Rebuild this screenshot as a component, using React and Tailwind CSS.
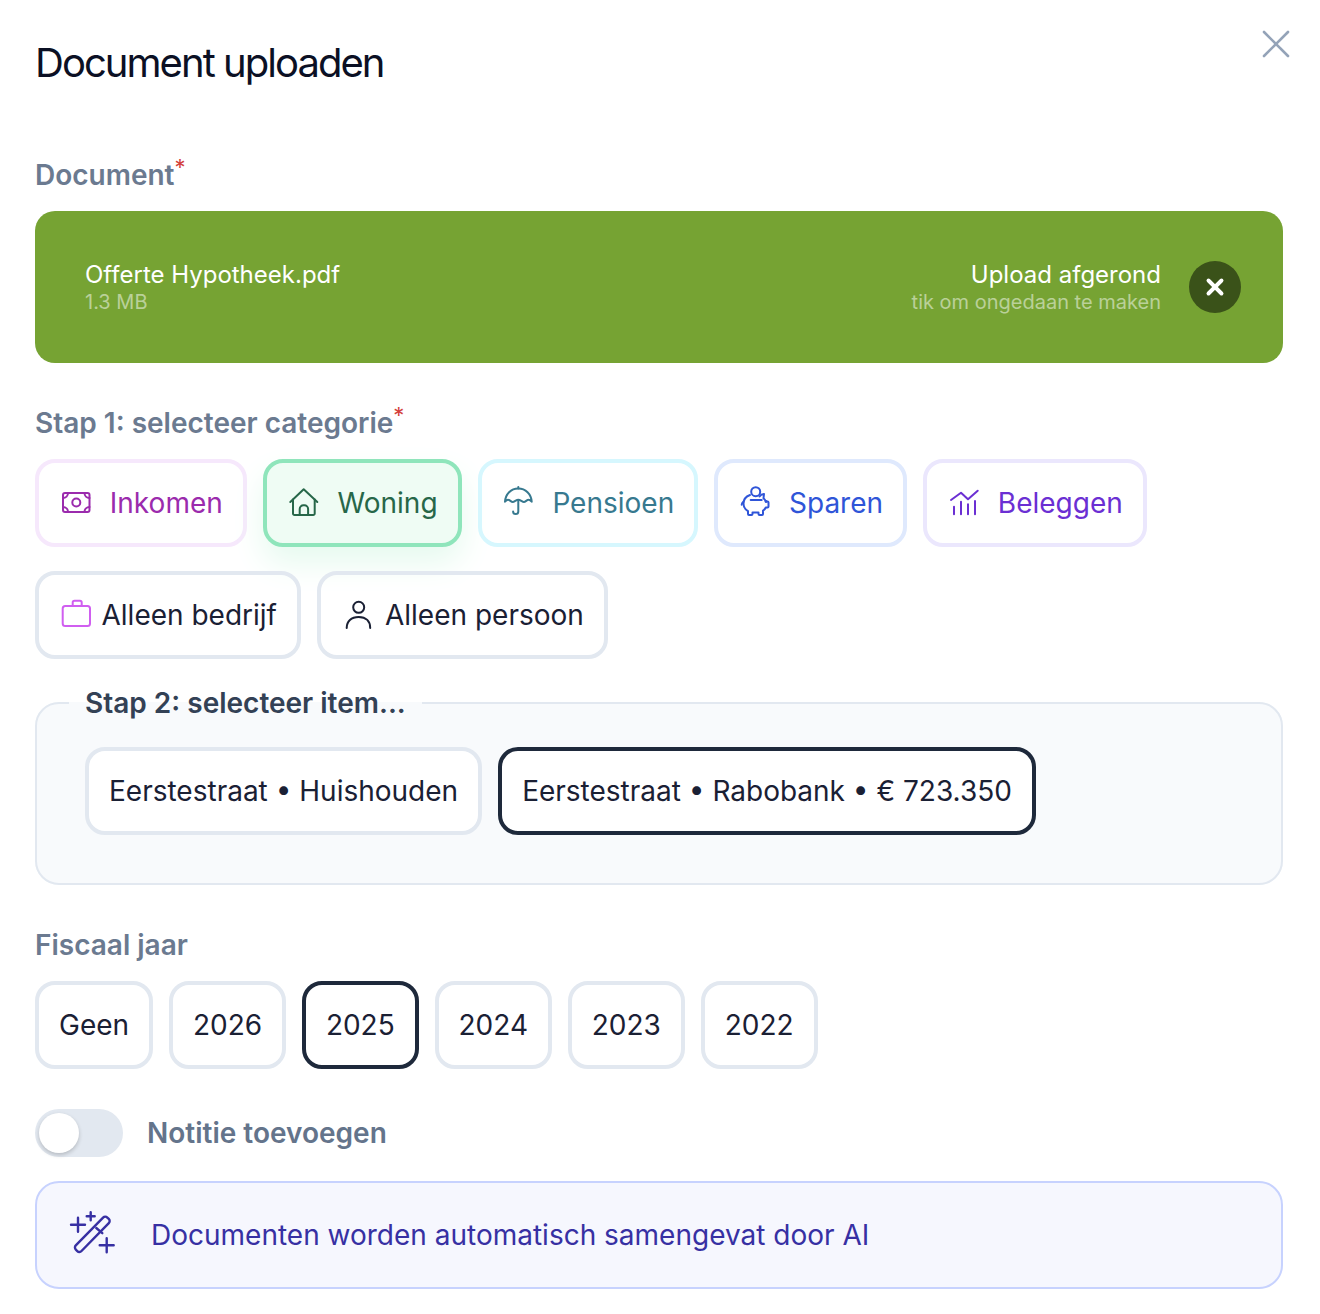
import React from 'react';
import { X } from 'lucide-react';

// Iconen getekend op een raster van 32px
const Icon = ({ children }) => (
    <svg viewBox="0 0 32 32" fill="none" stroke="currentColor" strokeWidth="2" strokeLinecap="round" strokeLinejoin="round" className="w-8 h-8 shrink-0 overflow-visible">
        {children}
    </svg>
);

const MoneyIcon = () => (
    <Icon>
        <rect x="4" y="6" width="26.500" height="19" rx="2" />
        <circle cx="17.300" cy="15.500" r="4" />
        <path d="M4 11a5 5 0 0 0 5-5M30.500 11a5 5 0 0 1-5-5M4 20a5 5 0 0 1 5 5M30.500 20a5 5 0 0 0-5 5" />
    </Icon>
);

const HomeIcon = () => (
    <Icon>
        <path d="M3.300 15 16.700 2.300 30.300 15" />
        <path d="M6 12.500V26.500a1.500 1.500 0 0 0 1.500 1.500h18.700a1.500 1.500 0 0 0 1.500-1.500V12.500" />
        <path d="M12.700 28v-6a3.700 3.700 0 0 1 3.700-3.700h1a3.700 3.700 0 0 1 3.700 3.700v6" />
    </Icon>
);

const UmbrellaIcon = () => (
    <Icon>
        <path d="M16.300 0v1.500" />
        <path d="M3 14.700C3.500 7 9 1.500 16.300 1.500S29.200 7 29.700 14.700c-1-1.200-2-1.900-3.100-1.900-1.800 0-3 2.200-4.700 2.200s-3.600-2.200-5.600-2.200-3.900 2.200-5.600 2.200-2.900-2.200-4.700-2.200c-1.100 0-2 .7-3 1.900Z" />
        <path d="M16.300 13v11.500a2.600 2.600 0 0 1-5.200 0" />
    </Icon>
);

const PiggyIcon = () => (
    <Icon>
        <circle cx="17.700" cy="4.700" r="4.500" />
        <path d="M12 8C8 9.500 5.500 12.500 5.500 16.500c0 3.500 1.800 6 4.500 7.700v2.800a1 1 0 0 0 1 1h2.500a1 1 0 0 0 1-1v-1.500h6v1.500a1 1 0 0 0 1 1h2.500a1 1 0 0 0 1-1v-3.300c1.400-.9 2.300-2 2.800-3.200h1.700a1 1 0 0 0 1-1v-4a1 1 0 0 0-1-1h-1.700c-.5-1.300-1.300-2.400-2.300-3.300l.5-4.200c-1.800 0-3.500 1-4.500 2.500" />
        <path d="M12.700 13h11" />
        <path d="M5.500 14.500c-1 .8-1.800 2-1.800 3.300" />
        <circle cx="28" cy="14.500" r=".4" />
    </Icon>
);

const ChartIcon = () => (
    <Icon>
        <path d="M4 13 14 5.700l7 6.600 9.700-8.600" />
        <path d="M7 19.700v7.600M14 14.700v12.600M21 17.300v10M28 14v13.300" />
    </Icon>
);

const BriefcaseIcon = () => (
    <Icon>
        <rect x="3.700" y="7" width="27.300" height="20" rx="2.500" />
        <path d="M13.700 7V3.500a1.800 1.800 0 0 1 1.800-1.800h5.400a1.800 1.800 0 0 1 1.800 1.800V7" />
    </Icon>
);

const UserIcon = () => (
    <Icon>
        <circle cx="17.700" cy="8.300" r="5.500" />
        <path d="M5.700 29c0-6.500 4.500-11 12-11s11.500 4.500 11.500 11" />
    </Icon>
);

const WandIcon = () => (
    <svg viewBox="0 0 60 54" fill="none" stroke="currentColor" strokeWidth="2.400" strokeLinecap="round" strokeLinejoin="round" className="w-[60px] h-[54px] shrink-0">
        <rect x="-22.500" y="-4" width="45" height="8" rx="3" transform="translate(28.300 26.300) rotate(-45.600)" />
        <path d="m32.300 20 6 5.200" />
        <path d="M7 16.700h14M14 9.700v14M22.700 8.300h8M26.700 4.300v8M35.700 37.300h14M42.700 30.300v14" />
    </svg>
);

const Label = ({ children, required }) => (
    <div className="text-[28px] leading-8 font-semibold text-[#6b7a90]">
        {children}
        {required && <span className="relative -top-2.5 text-[22px] leading-none font-normal text-[#d3403a]">*</span>}
    </div>
);

const Chip = ({ icon, label, gap = 'gap-[18.800px]', tone = 'border-[#e2e8f0] text-[#1a2034]', iconTone = '' }) => (
    <button className={`h-[88px] flex items-center px-5 border-4 rounded-[20px] whitespace-nowrap ${gap} ${tone}`}>
        {icon && <span className={iconTone}>{icon}</span>}
        <span>{label}</span>
    </button>
);

const categories = [
    { label: 'Inkomen', icon: <MoneyIcon />, tone: 'border-[#f6e8fc] text-[#9b2bad]' },
    { label: 'Woning', icon: <HomeIcon />, tone: 'border-[#8fe5bb] text-[#276749] bg-[#effcf4] shadow-[0_16px_32px_#e6faef]' },
    { label: 'Pensioen', icon: <UmbrellaIcon />, tone: 'border-[#d6f7fe] text-[#37798f]' },
    { label: 'Sparen', icon: <PiggyIcon />, tone: 'border-[#dfe9fd] text-[#2f55d8]' },
    { label: 'Beleggen', icon: <ChartIcon />, tone: 'border-[#ebe7fd] text-[#6b2fd3]' },
];

const years = ['Geen', '2026', '2025', '2024', '2023', '2022'];
const selectedTone = 'border-[#1e293b] text-[#1a2034]';

export default function App() {
    return (
        <div className="relative w-[1320px] bg-white pl-[35px] pr-[37px] pt-9 pb-[25px] text-[28px] font-['Inter',sans-serif]">
            {/* Sluitknop */}
            <button className="absolute top-5 right-5 text-[#94a3b8]">
                <X size={48} strokeWidth={1.3} />
            </button>

            <h1 className="text-[40px] leading-[54px] font-normal tracking-[-0.049em] text-[#0b1024]">Document uploaden</h1>

            <div className="mt-[69px]">
                <Label required>Document</Label>
            </div>

            {/* Geuploade bestand */}
            <div className="mt-5 h-[152px] flex items-center justify-between pl-[50px] pr-[42px] rounded-[20px] bg-[#76a333]">
                <div className="text-white">
                    <div className="leading-7 text-[24px]">Offerte Hypotheek.pdf</div>
                    <div className="mt-px text-[20px] leading-6 text-white/50">1.3 MB</div>
                </div>
                <div className="flex items-center gap-7">
                    <div className="text-right text-white">
                        <div className="leading-7 text-[24px]">Upload afgerond</div>
                        <div className="mt-px text-[20px] leading-6 text-white/50">tik om ongedaan te maken</div>
                    </div>
                    <div className="w-[52px] h-[52px] rounded-full bg-[#3a5219] flex items-center justify-center text-white">
                        <X size={26} strokeWidth={3.6} />
                    </div>
                </div>
            </div>

            {/* Stap 1 */}
            <div className="mt-11">
                <Label required>Stap 1: selecteer categorie</Label>
            </div>
            <div className="mt-5 flex flex-wrap gap-x-4 gap-y-6">
                {categories.map((c) => (
                    <Chip key={c.label} label={c.label} icon={c.icon} tone={c.tone} />
                ))}
                <div className="w-full flex gap-4">
                    <Chip label="Alleen bedrijf" gap="gap-[10.500px]" icon={<BriefcaseIcon />} iconTone="text-[#d05ef0]" />
                    <Chip label="Alleen persoon" gap="gap-3" icon={<UserIcon />} />
                </div>
            </div>

            {/* Stap 2 */}
            <fieldset className="mt-7 border-2 border-[#e2e8f0] rounded-[24px] bg-[#f8fafc] px-12 pt-7 pb-12">
                <legend className="-ml-4 px-4 text-[28px] leading-8 font-semibold text-[#334155]">Stap 2: selecteer item...</legend>
                <div className="flex gap-4">
                    <Chip label="Eerstestraat • Huishouden" tone="border-[#e2e8f0] text-[#1a2034] bg-white" />
                    <Chip label="Eerstestraat • Rabobank • € 723.350" tone={`${selectedTone} bg-white`} />
                </div>
            </fieldset>

            <div className="mt-11">
                <Label>Fiscaal jaar</Label>
            </div>
            <div className="mt-5 flex gap-[15.800px]">
                {years.map((y) => (
                    <Chip key={y} label={y} tone={y === '2025' ? selectedTone : undefined} />
                ))}
            </div>

            {/* Notitie */}
            <div className="mt-10 flex items-center gap-6">
                <div className="w-[88px] h-12 p-1 rounded-full bg-[#e2e8f0]">
                    <div className="w-10 h-10 rounded-full bg-white shadow-[0_2px_4px_rgba(0,0,0,0.2)]" />
                </div>
                <div className="font-semibold text-[#64748b]">Notitie toevoegen</div>
            </div>

            {/* AI melding */}
            <div className="mt-6 h-[108px] flex items-center gap-[27px] pl-[27px] border-2 border-[#c7d2fe] rounded-[24px] bg-[#f6f7fe] text-[#3730a3]">
                <WandIcon />
                <span>Documenten worden automatisch samengevat door AI</span>
            </div>
        </div>
    );
}
